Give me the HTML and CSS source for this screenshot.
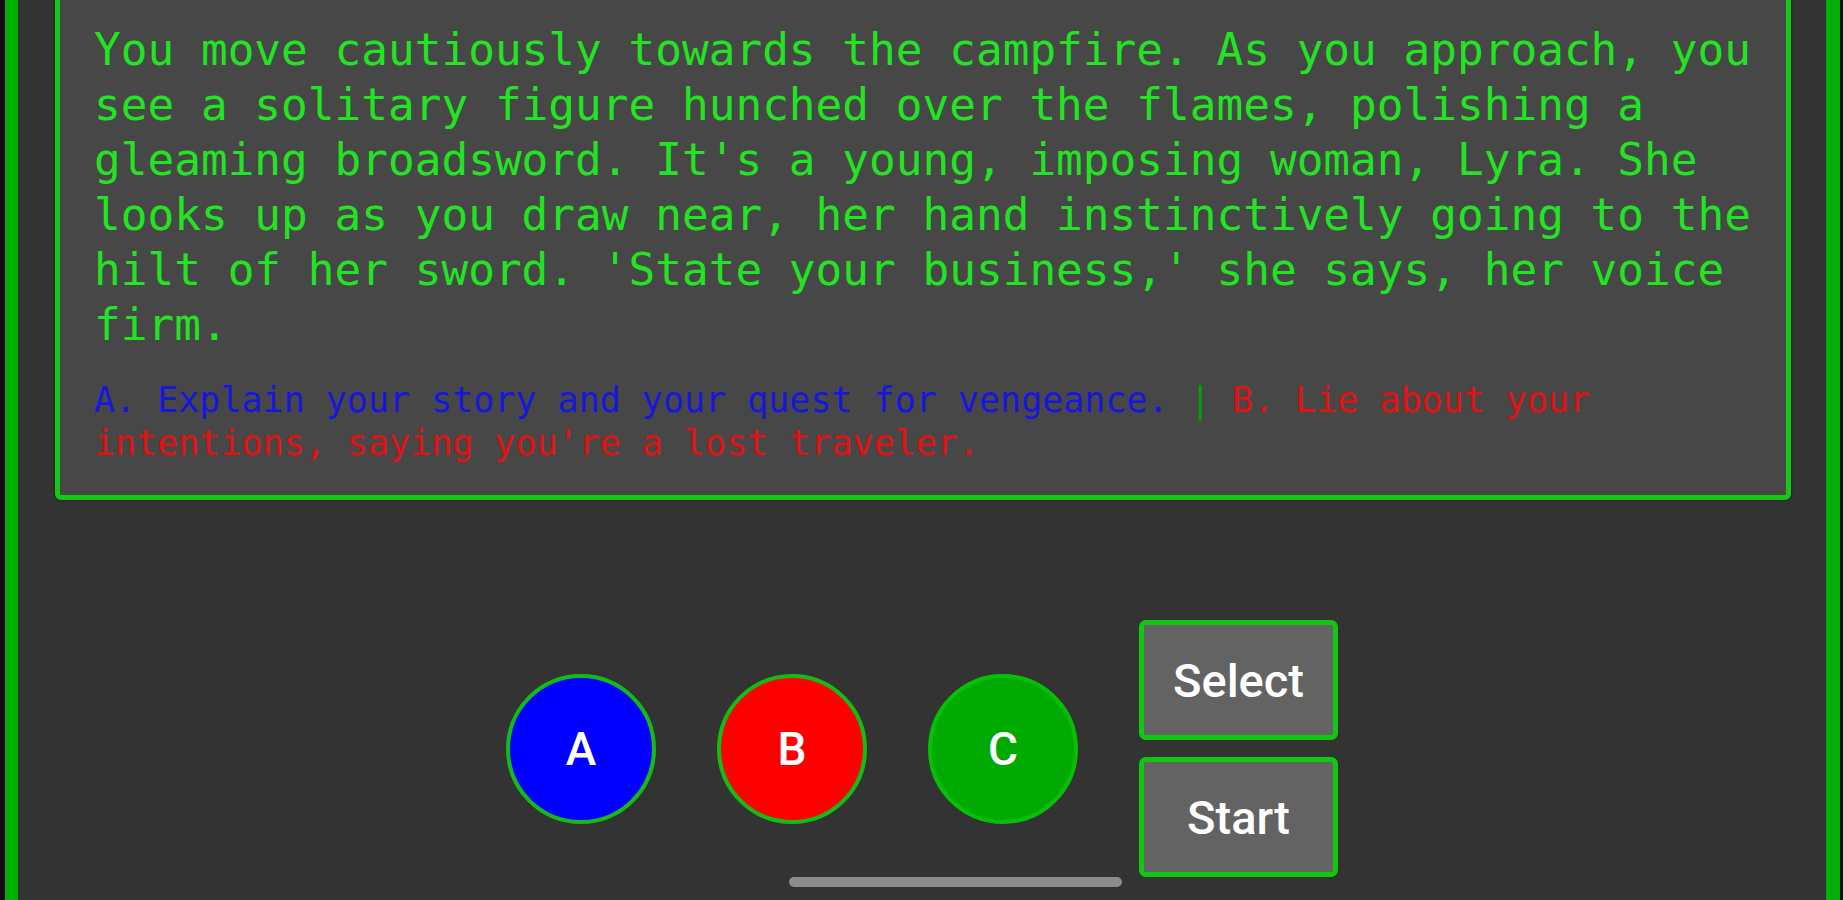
FILE: index.html
```html
<!DOCTYPE html>
<html lang="en">
<head>
<meta charset="utf-8">
<title>Adventure</title>
<link rel="stylesheet" href="styles.css">
</head>
<body>
<div class="frame">
  <section class="story">
    <p class="narration">You move cautiously towards the campfire. As you approach, you see a solitary figure hunched over the flames, polishing a gleaming broadsword. It's a young, imposing woman, Lyra. She looks up as you draw near, her hand instinctively going to the hilt of her sword. 'State your business,' she says, her voice firm.</p>
    <p class="choices"><span class="opt-a">A. Explain your story and your quest for vengeance.</span> <span class="sep">|</span> <span class="opt-b">B. Lie about your</span> <span class="opt-b">intentions, saying you're a lost traveler.</span></p>
  </section>
  <div class="controls">
    <button class="round round-a">A</button>
    <button class="round round-b">B</button>
    <button class="round round-c">C</button>
    <div class="sys-buttons">
      <button class="sys">Select</button>
      <button class="sys">Start</button>
    </div>
  </div>
  <div class="home-bar"></div>
</div>
</body>
</html>
```
FILE: styles.css
```css
html, body {
  margin: 0;
  padding: 0;
  height: 100%;
  overflow: hidden;
  background: #160a1a;
}

.frame {
  position: relative;
  box-sizing: border-box;
  height: 900px;
  margin: 0 3px 0 5px;
  background: #333333;
  border-left: 13px solid #00b000;
  border-right: 14px solid #00b000;
  overflow: hidden;
}

.story {
  margin: -20px 35px 0 37px;
  padding: 37px 20px 30px 34px;
  background: #474747;
  border: 5px solid #14c814;
  border-radius: 6px;
  box-shadow: 0 0 3px rgba(20, 0, 30, 0.7);
}

.narration {
  margin: 0;
  font-family: "DejaVu Sans Mono", monospace;
  font-size: 44.4px;
  line-height: 55px;
  color: #22e422;
}

.choices {
  margin: 27px 0 0 0;
  font-family: "DejaVu Sans Mono", monospace;
  font-size: 35px;
  line-height: 43px;
}

.opt-a { color: #1616dc; }
.opt-b { color: #e01212; }
.sep { color: #0a9a0a; }

.controls {
  display: flex;
  justify-content: center;
  align-items: center;
  gap: 61px;
  margin-top: 120px;
}

.round {
  box-sizing: border-box;
  width: 150px;
  height: 150px;
  border-radius: 50%;
  border: 4px solid #14bb14;
  color: #ffffff;
  font-family: Roboto, "Liberation Sans", sans-serif;
  font-size: 46px;
  font-weight: 500;
  padding: 0;
}

.round-a { background: #0000ff; }
.round-b { background: #ff0000; }
.round-c { background: #00aa00; border-color: #06c006; }

.sys-buttons {
  display: flex;
  flex-direction: column;
  gap: 17px;
}

.sys {
  box-sizing: border-box;
  width: 199px;
  height: 120px;
  background: #636363;
  border: 5px solid #10c810;
  border-radius: 7px;
  color: #ffffff;
  font-family: Roboto, "Liberation Sans", sans-serif;
  font-size: 47px;
  font-weight: 500;
  padding: 0;
}

.home-bar {
  position: absolute;
  left: 771px;
  top: 877px;
  width: 333px;
  height: 10px;
  border-radius: 5px;
  background: #8c8c8c;
}
```
